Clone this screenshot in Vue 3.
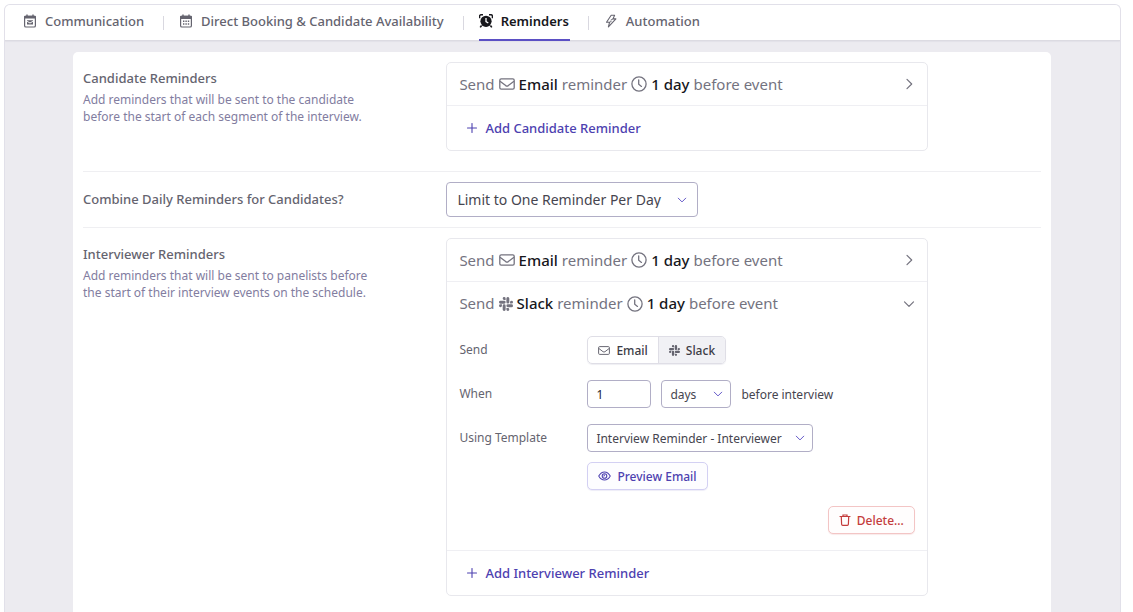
<script setup>
import { ref } from 'vue'

const activeTab = ref('Reminders')
const tabs = [
  { name: 'Communication', icon: 'calendar-mail' },
  { name: 'Direct Booking & Candidate Availability', icon: 'calendar' },
  { name: 'Reminders', icon: 'alarm' },
  { name: 'Automation', icon: 'bolt' },
]

const combine = ref('Limit to One Reminder Per Day')
const channel = ref('slack')
const amount = ref('1')
const unit = ref('days')
const template = ref('Interview Reminder - Interviewer')

const interviewerReminders = [
  { channel: 'Email', when: '1 day', open: false },
  { channel: 'Slack', when: '1 day', open: true },
]
</script>

<template>
  <svg class="sprite" aria-hidden="true">
    <symbol id="i-mail" viewBox="0 0 16 12">
      <rect x="0.8" y="0.8" width="14.4" height="10.4" rx="1.4" fill="none" stroke="currentColor" stroke-width="1.3" />
      <path d="M1 3.2 6.7 7.6Q8 8.5 9.3 7.6L15 3.2" fill="none" stroke="currentColor" stroke-width="1.3" />
    </symbol>
    <symbol id="i-clock" viewBox="0 0 16 16">
      <circle cx="8" cy="8" r="7.1" fill="none" stroke="currentColor" stroke-width="1.3" />
      <path d="M7.7 3.8V8.2L10.5 10.4" fill="none" stroke="currentColor" stroke-width="1.3" stroke-linecap="round" />
    </symbol>
    <symbol id="i-slack" viewBox="0 0 24 24">
      <g fill="currentColor">
        <path d="M5.04 15.16a2.52 2.52 0 1 1-2.52-2.52h2.52zM6.31 15.16a2.52 2.52 0 0 1 5.05 0v6.32a2.52 2.52 0 0 1-5.05 0z" />
        <path d="M8.83 5.04a2.52 2.52 0 1 1 2.52-2.52v2.52zM8.83 6.31a2.52 2.52 0 0 1 0 5.05H2.52a2.52 2.52 0 0 1 0-5.05z" />
        <path d="M18.96 8.83a2.52 2.52 0 1 1 2.52 2.52h-2.52zM17.69 8.83a2.52 2.52 0 0 1-5.05 0V2.52a2.52 2.52 0 0 1 5.05 0z" />
        <path d="M15.17 18.96a2.52 2.52 0 1 1-2.52 2.52v-2.52zM15.17 17.69a2.52 2.52 0 0 1 0-5.05h6.31a2.52 2.52 0 0 1 0 5.05z" />
      </g>
    </symbol>
    <symbol id="i-calendar" viewBox="0 0 14 14">
      <path d="M1 2.6Q1 1.8 2 1.8H12Q13 1.8 13 2.6V5H1z" fill="currentColor" />
      <rect x="1.6" y="2.4" width="10.8" height="10.6" rx="1.3" fill="none" stroke="currentColor" stroke-width="1.2" />
      <path d="M4 0.4V3M10 0.4V3" stroke="currentColor" stroke-width="1.4" />
      <path d="M4 7.3H10.2M4 10H10.2" stroke="currentColor" stroke-width="1.4" stroke-dasharray="1.4 1" />
    </symbol>
    <symbol id="i-calendar-mail" viewBox="0 0 14 14">
      <path d="M1 2.6Q1 1.8 2 1.8H12Q13 1.8 13 2.6V4.6H1z" fill="currentColor" />
      <rect x="1.6" y="2.4" width="10.8" height="10.6" rx="1.3" fill="none" stroke="currentColor" stroke-width="1.2" />
      <path d="M4 0.4V3M10 0.4V3" stroke="currentColor" stroke-width="1.4" />
      <path d="M4 6.2H10V6.8L7 8.5 4 6.8zM4 7.8 7 9.4 10 7.8V10.6H4z" fill="currentColor" />
    </symbol>
    <symbol id="i-alarm" viewBox="0 0 14 14">
      <path d="M0.6 4.2V2.2Q0.6 0.8 2 0.8H4M10 0.8H12Q13.4 0.8 13.4 2.2V4.2" fill="none" stroke="currentColor" stroke-width="1.4" />
      <path d="M2.6 11.5 1.2 13.4M11.4 11.5 12.8 13.4" stroke="currentColor" stroke-width="1.6" />
      <circle cx="7" cy="7.3" r="5.6" fill="currentColor" />
      <path d="M7 4V7.6L9.3 9" fill="none" stroke="#fff" stroke-width="1.3" />
    </symbol>
    <symbol id="i-bolt" viewBox="0 0 12 14">
      <path d="M6.2 1.2H9.6L8 4.9H10.9L3.4 12.8 4.6 8.2H1.5z" fill="none" stroke="currentColor" stroke-width="1.1" stroke-linejoin="round" />
      <path d="M8 4.9 5.6 6.2M4.6 8.2 6.6 7.2" stroke="currentColor" stroke-width="0.9" />
    </symbol>
    <symbol id="i-down" viewBox="0 0 12 12">
      <path d="M1.5 3.8 6 8.3 10.5 3.8" fill="none" stroke="currentColor" stroke-width="1.2" stroke-linecap="round" stroke-linejoin="round" />
    </symbol>
    <symbol id="i-right" viewBox="0 0 12 12">
      <path d="M4 1.3 8.7 6 4 10.7" fill="none" stroke="currentColor" stroke-width="1.2" stroke-linecap="round" stroke-linejoin="round" />
    </symbol>
    <symbol id="i-plus" viewBox="0 0 10 10">
      <path d="M5 0.5V9.5M0.5 5H9.5" stroke="currentColor" stroke-width="1.1" stroke-linecap="round" />
    </symbol>
    <symbol id="i-eye" viewBox="0 0 14 12">
      <path d="M0.8 6C2.4 3.1 4.5 1.6 7 1.6S11.6 3.1 13.2 6C11.6 8.9 9.5 10.4 7 10.4S2.4 8.9 0.8 6z" fill="none" stroke="currentColor" stroke-width="1.1" />
      <circle cx="7" cy="6" r="2.5" fill="none" stroke="currentColor" stroke-width="1.1" />
      <path d="M7 4.4V6H5.5" fill="none" stroke="currentColor" stroke-width="0.8" />
    </symbol>
    <symbol id="i-trash" viewBox="0 0 12 12">
      <path d="M1 2.5H11M4 2.3V1H8V2.3M2.3 2.7 2.6 10.3Q2.7 11.3 3.7 11.3H8.3Q9.3 11.3 9.4 10.3L9.7 2.7" fill="none" stroke="currentColor" stroke-width="1.2" stroke-linecap="round" />
    </symbol>
  </svg>

  <div class="frame">
    <nav class="tabs">
      <div v-for="tab in tabs" :key="tab.name" class="tab-cell">
        <button class="tab" :class="{ active: tab.name === activeTab }" type="button" @click="activeTab = tab.name">
          <svg class="tab-icon"><use :href="`#i-${tab.icon}`" /></svg>
          {{ tab.name }}
        </button>
      </div>
    </nav>

    <main class="card">
      <section class="setting">
        <div>
          <h2>Candidate Reminders</h2>
          <p>Add reminders that will be sent to the candidate<br />before the start of each segment of the interview.</p>
        </div>
        <div class="list">
          <button class="summary" type="button" aria-expanded="false">
            <span>Send</span>
            <svg class="mail"><use href="#i-mail" /></svg>
            <strong>Email</strong>
            <span>reminder</span>
            <svg class="clock"><use href="#i-clock" /></svg>
            <strong>1 day</strong>
            <span>before event</span>
            <svg class="chevron"><use href="#i-right" /></svg>
          </button>
          <button class="add" type="button">
            <svg class="plus"><use href="#i-plus" /></svg>Add Candidate Reminder
          </button>
        </div>
      </section>

      <section class="setting middle">
        <label class="title" for="combine">Combine Daily Reminders for Candidates?</label>
        <div class="select large">
          <select id="combine" v-model="combine"><option>Limit to One Reminder Per Day</option></select>
          <svg><use href="#i-down" /></svg>
        </div>
      </section>

      <section class="setting last">
        <div>
          <h2>Interviewer Reminders</h2>
          <p>Add reminders that will be sent to panelists before<br />the start of their interview events on the schedule.</p>
        </div>
        <div class="list">
          <template v-for="item in interviewerReminders" :key="item.channel">
            <button class="summary" :class="{ open: item.open }" type="button" :aria-expanded="item.open">
              <span>Send</span>
              <svg v-if="item.channel === 'Email'" class="mail"><use href="#i-mail" /></svg>
              <svg v-else class="slack"><use href="#i-slack" /></svg>
              <strong>{{ item.channel }}</strong>
              <span>reminder</span>
              <svg class="clock"><use href="#i-clock" /></svg>
              <strong>{{ item.when }}</strong>
              <span>before event</span>
              <svg class="chevron"><use :href="item.open ? '#i-down' : '#i-right'" /></svg>
            </button>
          </template>

          <form class="details" @submit.prevent>
            <div class="field">
              <span id="send-label" class="name">Send</span>
              <div class="segments" role="radiogroup" aria-labelledby="send-label">
                <label :class="{ on: channel === 'email' }">
                  <input v-model="channel" type="radio" name="channel" value="email" />
                  <svg class="mail"><use href="#i-mail" /></svg>Email
                </label>
                <label :class="{ on: channel === 'slack' }">
                  <input v-model="channel" type="radio" name="channel" value="slack" />
                  <svg class="slack"><use href="#i-slack" /></svg>Slack
                </label>
              </div>
            </div>

            <div class="field">
              <label class="name" for="amount">When</label>
              <div class="controls">
                <input id="amount" v-model="amount" class="amount" type="text" inputmode="numeric" />
                <div class="select unit">
                  <select v-model="unit" aria-label="Unit"><option>days</option></select>
                  <svg><use href="#i-down" /></svg>
                </div>
                <span class="after">before interview</span>
              </div>
            </div>

            <div class="field">
              <label class="name" for="template">Using Template</label>
              <div class="stack">
                <div class="select template">
                  <select id="template" v-model="template"><option>Interview Reminder - Interviewer</option></select>
                  <svg><use href="#i-down" /></svg>
                </div>
                <button class="button preview" type="button">
                  <svg class="eye"><use href="#i-eye" /></svg>Preview Email
                </button>
              </div>
            </div>

            <button class="button delete" type="button">
              <svg class="trash"><use href="#i-trash" /></svg>Delete...
            </button>
          </form>

          <button class="add" type="button">
            <svg class="plus"><use href="#i-plus" /></svg>Add Interviewer Reminder
          </button>
        </div>
      </section>
    </main>
  </div>
</template>

<style>
html {
  background: #fff;
}
html,
body,
#app {
  height: 100%;
}
body {
  overflow: hidden;
}
</style>

<style scoped>
* {
  box-sizing: border-box;
}
.sprite {
  position: absolute;
  width: 0;
  height: 0;
}
svg {
  flex: none;
}
button,
input,
select {
  font: inherit;
  color: inherit;
  margin: 0;
}
button {
  cursor: pointer;
}
.frame {
  display: flex;
  flex-direction: column;
  min-height: 100%;
  margin: 0 12px 0 4px;
  border: 1px solid #e1e0e9;
  border-bottom: 0;
  border-radius: 6px 6px 0 0;
  background: #ecebf0;
  font-family: "Noto Sans", "Open Sans", sans-serif;
  font-size: 13px;
  line-height: 17px;
  color: #65646f;
  translate: none;
}
.frame {
  margin-top: 4px;
}
#app {
  display: flow-root;
}
.tabs {
  display: flex;
  height: 36px;
  padding-left: 18px;
  background: #fff;
  border-bottom: 1px solid #dcdbe2;
  border-radius: 5px 5px 0 0;
  box-shadow: 0 1px 1px #e3e2e8;
}
.tab-cell {
  display: flex;
  align-items: center;
}
.tab-cell + .tab-cell::before {
  content: "";
  width: 1px;
  height: 14px;
  margin: 0 15px 0 18px;
  background: #d9d8e0;
}
.tab {
  display: flex;
  align-items: center;
  gap: 8px;
  height: 36px;
  padding: 0 1px 1px 0;
  border: 0;
  border-bottom: 2px solid transparent;
  background: none;
  font-weight: 500;
}
.tab.active {
  border-color: #5b4fc4;
  color: #17171c;
  font-weight: 600;
}
.tab-icon {
  width: 14px;
  height: 14px;
}
.card {
  flex: 1;
  margin: 11px 69px 0 68px;
  padding: 0 10px;
  background: #fff;
  border-radius: 5px 5px 0 0;
}
.setting {
  display: grid;
  grid-template-columns: 363fr 481fr 113fr;
  padding: 10px 0 20px;
  border-bottom: 1px solid #efeff2;
}
.middle {
  align-items: center;
  padding: 10px 0;
}
.last {
  border-bottom: 0;
}
h2,
.title {
  margin: 0;
  font-size: 13px;
  line-height: 17px;
  font-weight: 500;
}
h2 {
  margin-top: 8px;
}
p {
  margin: 4px 0 0;
  font-size: 12px;
  line-height: 17px;
  color: #827d9f;
}
.list {
  display: flex;
  flex-direction: column;
  border: 1px solid #e8e8ed;
  border-radius: 5px;
}
.summary {
  display: flex;
  align-items: center;
  gap: 4px;
  height: 43px;
  padding: 0 12px;
  border: 0;
  border-bottom: 1px solid #efeff3;
  background: none;
  font-size: 15px;
  color: #74737f;
}
.summary.open {
  border-bottom: 0;
}
.summary strong {
  font-weight: 500;
  color: #17171c;
}
.mail {
  width: 16px;
  height: 12px;
}
.clock {
  width: 16px;
  height: 16px;
}
.slack {
  width: 14px;
  height: 14px;
}
.chevron {
  width: 12px;
  height: 12px;
  margin-left: auto;
}
.add {
  display: flex;
  align-items: center;
  gap: 8px;
  height: 44px;
  padding: 0 20px;
  border: 0;
  background: none;
  font-weight: 500;
  color: #4d41b0;
}
.plus {
  width: 10px;
  height: 10px;
}
.select {
  display: grid;
  align-items: center;
  color: #46454f;
}
.select select {
  grid-area: 1 / 1;
  width: 100%;
  height: 28px;
  padding: 0 8px;
  appearance: none;
  border: 1px solid #b1aec6;
  border-radius: 4px;
  background: #fff;
}
.select svg {
  grid-area: 1 / 1;
  justify-self: end;
  width: 10px;
  height: 10px;
  margin-right: 8px;
  color: #6459c8;
  pointer-events: none;
}
.large {
  width: 252px;
  font-size: 14px;
}
.large select {
  height: 35px;
  padding: 0 10px;
}
.large svg {
  margin-right: 11px;
}
.details {
  display: flex;
  flex-direction: column;
  gap: 16px;
  padding: 11px 12px 16px;
  border-bottom: 1px solid #efeff3;
}
.field {
  display: grid;
  grid-template-columns: 128px 1fr;
  align-items: start;
}
.name {
  line-height: 28px;
}
.name,
.after {
  font-size: 12px;
}
.segments {
  display: flex;
  width: max-content;
  height: 28px;
  border: 1px solid #dfdee6;
  border-radius: 5px;
  box-shadow: 0 1px 1px #efeff3;
  font-size: 12px;
  font-weight: 500;
  color: #3d3c46;
  overflow: hidden;
}
.segments label {
  display: flex;
  align-items: center;
  gap: 6px;
  padding: 0 10px;
  cursor: pointer;
}
.segments label + label {
  border-left: 1px solid #dfdee6;
}
.segments .on {
  background: #f1f1f5;
}
.segments input {
  position: absolute;
  width: 1px;
  height: 1px;
  opacity: 0;
}
.segments .mail {
  width: 12px;
  height: 9px;
}
.segments .slack {
  width: 11px;
  height: 11px;
}
.segments svg {
  color: #65646f;
}
.controls {
  display: flex;
  align-items: center;
  gap: 10px;
  font-size: 12px;
}
.amount {
  width: 64px;
  height: 28px;
  padding: 0 8px;
  border: 1px solid #b1aec6;
  border-radius: 4px;
  background: #fff;
  color: #26252c;
}
.unit {
  width: 70px;
}
.after {
  color: #46454f;
}
.stack {
  display: flex;
  flex-direction: column;
  align-items: flex-start;
  gap: 10px;
  font-size: 12px;
}
.template {
  width: 226px;
}
.button {
  display: flex;
  align-items: center;
  gap: 6px;
  height: 28px;
  padding: 0 10px;
  border: 1px solid;
  border-radius: 5px;
  font-size: 12px;
  font-weight: 500;
}
.preview {
  border-color: #d3d0f3;
  background: #fdfdff;
  box-shadow: 0 1px 1px #eeedf8;
  color: #4d41b0;
}
.delete {
  align-self: flex-end;
  border-color: #f3c5c5;
  background: #fffdfd;
  box-shadow: 0 1px 1px #f9eaea;
  color: #c43c3c;
}
.eye {
  width: 13px;
  height: 12px;
}
.trash {
  width: 12px;
  height: 12px;
}
</style>
